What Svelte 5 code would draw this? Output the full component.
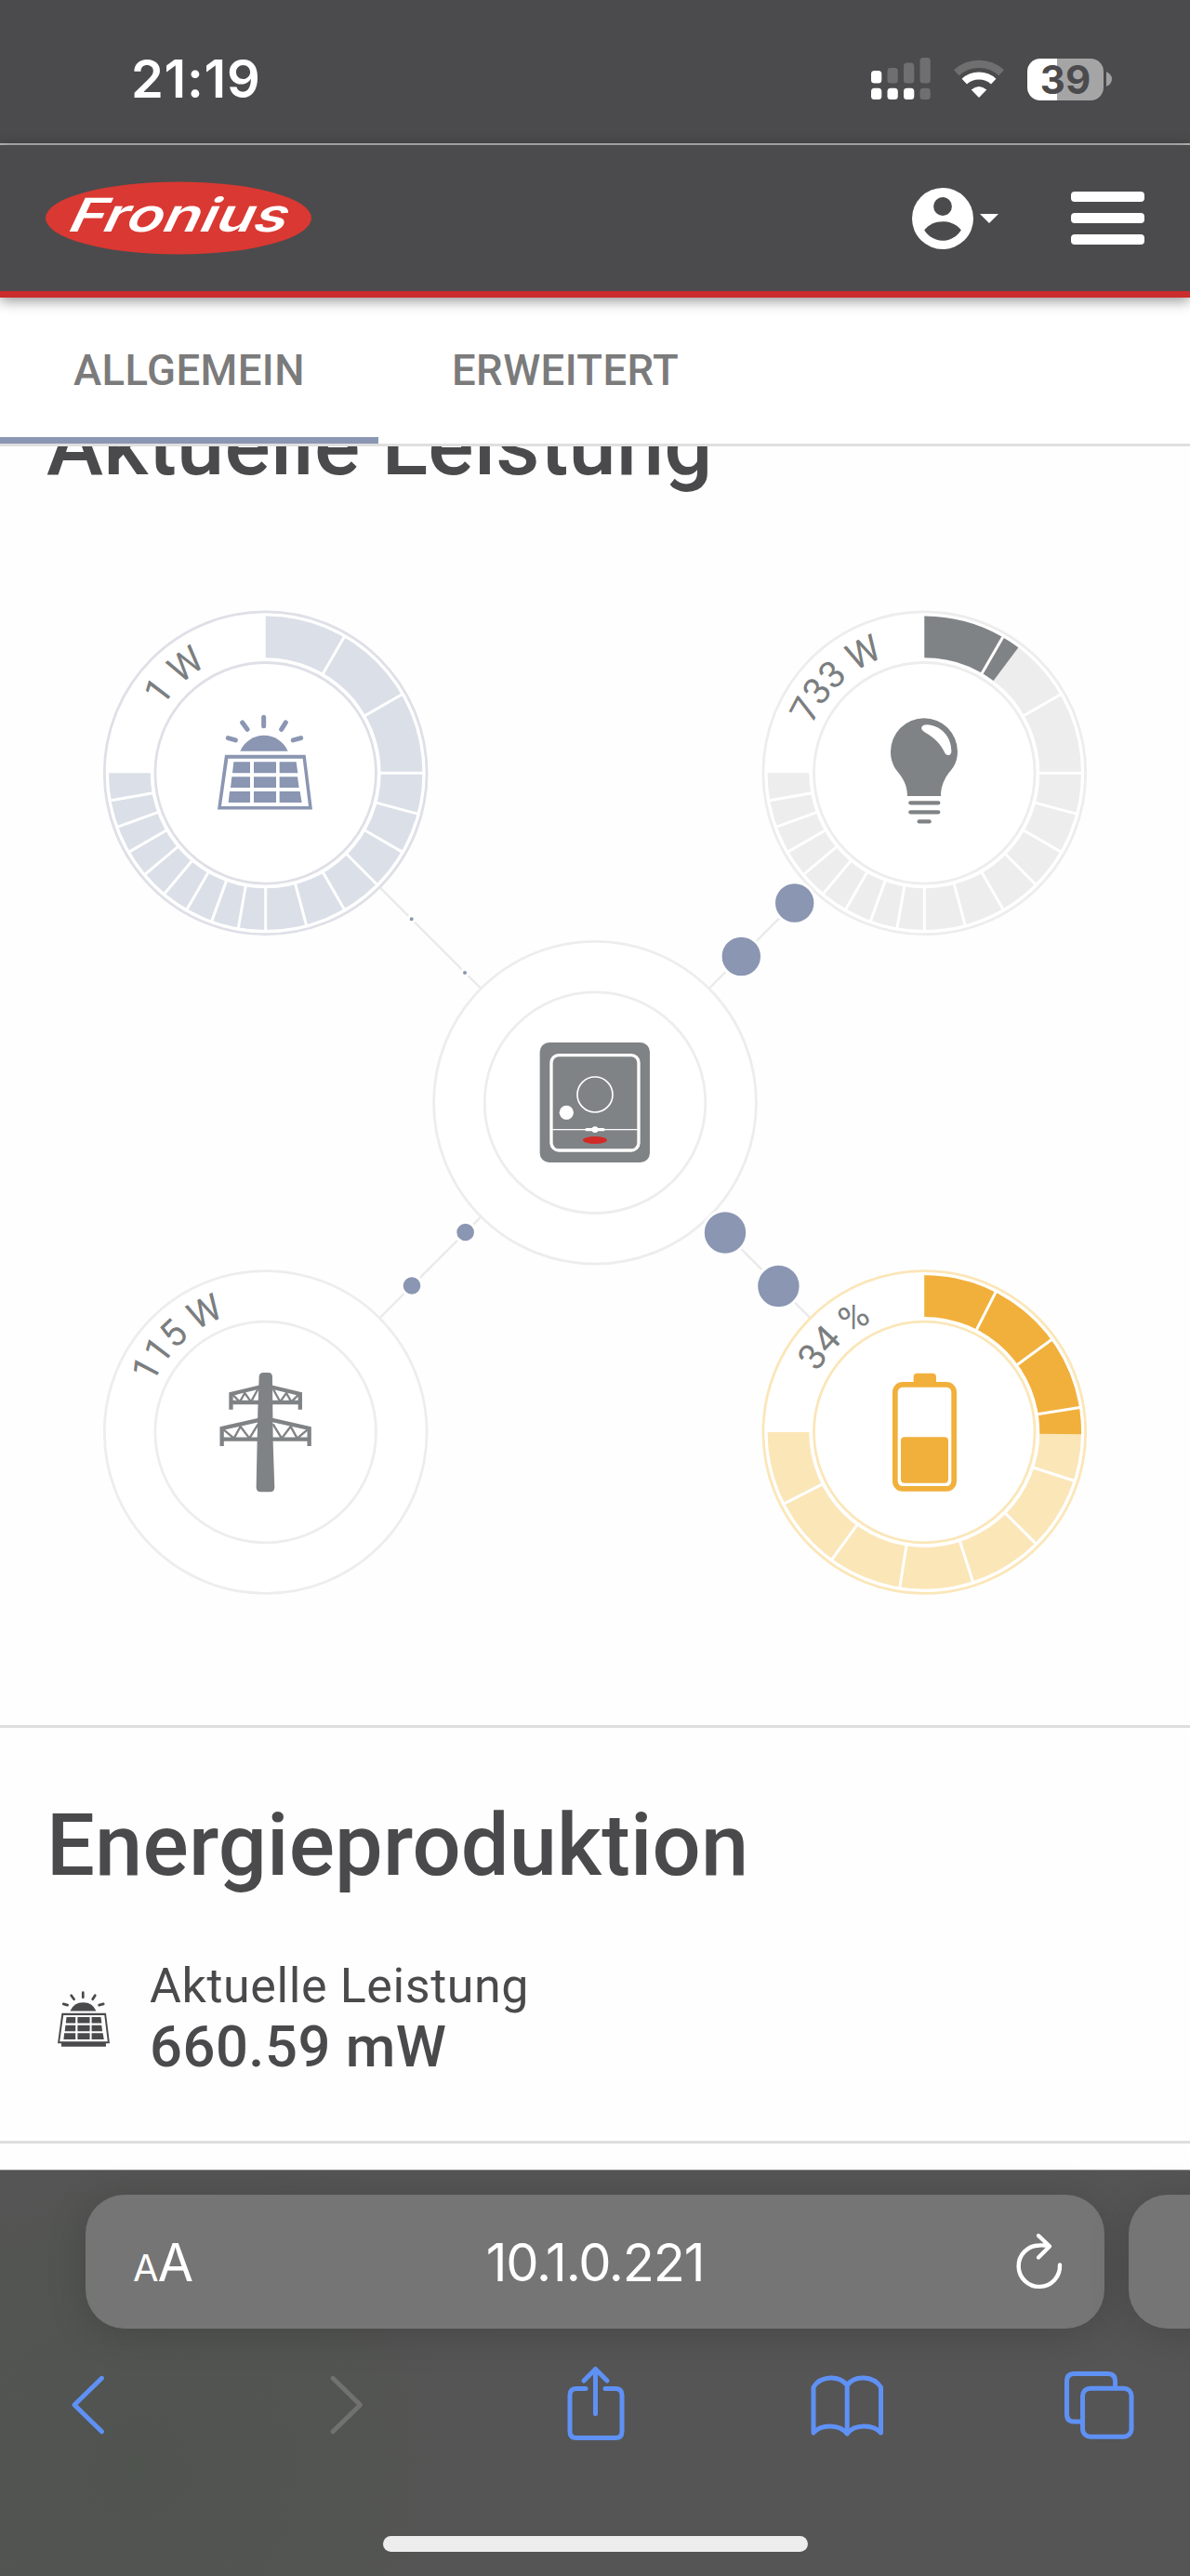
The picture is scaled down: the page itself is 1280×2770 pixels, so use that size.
<script lang="ts">
  type Pt = { x: number; y: number };
  type Ring = { bg: string; fg: string; line: string; marks: number[]; fill: number };
  type Item = {
    id: string; x: number; y: number; label?: string;
    line: string; ring?: Ring; dots: Pt[]; dotR: number;
  };

  const R_OUT = 173.4;   // outer outline
  const R_IN  = 118.8;   // inner outline
  const S_OUT = 168.7;   // scale, outer edge
  const S_IN  = 124;     // scale, inner edge
  const R_TXT = 131.5;

  const hub: Pt = { x: 640, y: 585.7 };

  // power scale gets finer: 30° steps, then 15°, then 10°
  const powerMarks = [30, 60, 90, 105, 120, 135, 150, 165, 180, 190, 200, 210, 220, 230, 240, 250, 260];
  const percentMarks = [27, 54, 81, 108, 135, 162, 189, 216, 243];

  const items: Item[] = [
    {
      id: "pv", x: 285.7, y: 231.3, label: "1 W", line: "#dfe0e7",
      ring: { bg: "#dbdfe7", fg: "#8a96b2", line: "#fff", marks: powerMarks, fill: 0 },
      dots: [{ x: 442.7, y: 388.3 }, { x: 500, y: 446 }], dotR: 2,
    },
    {
      id: "load", x: 994.3, y: 231.3, label: "733 W", line: "#ededed",
      ring: { bg: "#ededed", fg: "#808385", line: "#fff", marks: powerMarks, fill: 36.8 },
      dots: [{ x: 854.7, y: 371 }, { x: 797.3, y: 428.5 }], dotR: 20.7,
    },
    {
      id: "grid", x: 285.7, y: 940, label: "115 W", line: "#ededed",
      dots: [{ x: 443, y: 782.5 }, { x: 500.6, y: 725 }], dotR: 9.3,
    },
    {
      id: "battery", x: 994.3, y: 940, label: "34 %", line: "#fbe6b8",
      ring: { bg: "#fbe6b8", fg: "#f1b03b", line: "#fff", marks: percentMarks, fill: 90.8 },
      dots: [{ x: 780, y: 725.5 }, { x: 837.4, y: 783 }], dotR: 22.2,
    },
  ];

  const circles = [...items, { id: "inverter", x: hub.x, y: hub.y, line: "#ededed" } as Item];

  function polar(r: number, deg: number): string {
    const a = (deg - 90) * Math.PI / 180;
    return `${(r * Math.cos(a)).toFixed(2)} ${(r * Math.sin(a)).toFixed(2)}`;
  }

  // ring sector, 0° = top, clockwise
  function sector(from: number, to: number): string {
    const large = to - from > 180 ? 1 : 0;
    return `M${polar(S_OUT, from)}A${S_OUT} ${S_OUT} 0 ${large} 1 ${polar(S_OUT, to)}` +
      `L${polar(S_IN, to)}A${S_IN} ${S_IN} 0 ${large} 0 ${polar(S_IN, from)}Z`;
  }

  const bars = [
    { top: 14, on: true }, { top: 11, on: false }, { top: 5.5, on: false }, { top: 0, on: false },
  ];
</script>

{#snippet solarIcon(base: boolean)}
  <path fill-rule="evenodd" d="M24 130H284L306 307H0ZM34 142L12 296H294L275 142Z" />
  <path d="M52 153H105V189H48ZM117 153H189V189H117ZM200 153H254L259 189H200Z" />
  <path d="M46 201H105V236H42ZM117 201H189V236H117ZM200 201H258L263 236H200Z" />
  <path d="M39 248H105V284H35ZM117 248H189V284H117ZM200 248H266L272 284H200Z" />
  <path d="M73 118A84 84 0 0 1 227 118Z" />
  <path class="rays" d="M34 76L58 83M80 26L96 48M149 9V37M220 26L206 48M269 76L244 83" />
  {#if base}<path d="M22 302H284V327H22Z" />{/if}
{/snippet}

<div class="phone">
  <div class="status">
    <span class="time">21:19</span>
    <div class="indicators">
      <svg width="65" height="46" viewBox="0 0 65 46" fill="#fff">
        {#each bars as b, i}
          <rect x={i * 17.5} y={b.top} width="11.3" height={27.6 - b.top} rx="3.5" opacity={b.on ? 1 : 0.2} />
          <rect x={i * 17.5} y="32.7" width="11.3" height="12.3" rx="3.5" opacity={i < 3 ? 1 : 0.2} />
        {/each}
      </svg>
      <svg class="wifi" width="56" height="46" viewBox="0 0 56 46" fill="none" stroke="#fff">
        <path d="M3.8 16.2A36 36 0 0 1 52.2 16.2" stroke-width="8.2" opacity=".2" />
        <path d="M12.3 25.6A23.3 23.3 0 0 1 43.7 25.6" stroke-width="8" />
        <path d="M28 43L19.7 34.5Q28 27.5 36.3 34.5Z" fill="#fff" stroke="none" />
      </svg>
      <div class="batt"><span>39</span></div>
      <svg width="6" height="16" viewBox="0 0 6 16"><path d="M0 0Q6 3 6 8T0 16Z" fill="#a0a0a1" /></svg>
    </div>
  </div>

  <header>
    <svg class="logo" width="286" height="79" viewBox="0 0 286 79">
      <ellipse cx="143" cy="39.5" rx="143" ry="39" fill="#da3832" />
      <text transform="translate(24 54) skewX(-14)" textLength="234" lengthAdjust="spacingAndGlyphs">Fronius</text>
    </svg>
    <div class="actions">
      <svg width="66" height="66" viewBox="0 0 66 66">
        <circle cx="33" cy="33" r="33" fill="#fff" />
        <circle cx="33" cy="20" r="9.9" fill="#4b4b4d" />
        <path d="M13.2 45.5C22 33 44 33 52.8 45.5C43 60.5 23 60.5 13.2 45.5Z" fill="#4b4b4d" />
      </svg>
      <svg class="caret" width="20" height="10" viewBox="0 0 20 10"><path d="M0 0H20L10 10Z" fill="#fff" /></svg>
      <div class="burger"><i></i><i></i><i></i></div>
    </div>
  </header>

  <nav>
    <span class="tab active">ALLGEMEIN</span>
    <span class="tab">ERWEITERT</span>
  </nav>

  <section class="power">
    <h1>Aktuelle Leistung</h1>
    <svg class="flow" width="1280" height="1160" viewBox="0 0 1280 1160">
      <defs>
        <path id="arc" d="M{-R_TXT} 0A{R_TXT} {R_TXT} 0 0 1 0 {-R_TXT}" />
      </defs>

      {#each items as it}
        <line x1={it.x} y1={it.y} x2={hub.x} y2={hub.y} stroke="#eaeaea" stroke-width="2.4" />
      {/each}

      {#each circles as c}
        <g transform="translate({c.x} {c.y})">
          <circle r={R_OUT} fill="#fff" stroke={c.line} stroke-width="2.8" />
          <circle r={R_IN} fill="none" stroke={c.line} stroke-width="2.8" />
          {#if c.ring}
            <path d={sector(0, 270)} fill={c.ring.bg} />
            {#if c.ring.fill > 0}
              <path d={sector(0, c.ring.fill)} fill={c.ring.fg} />
            {/if}
            {#each c.ring.marks as m}
              <line y1={-S_IN + 1} y2={-S_OUT - 0.5} transform="rotate({m})" stroke={c.ring.line} stroke-width="3" />
            {/each}
          {/if}
          {#if c.label}
            <text class="value" text-anchor="middle"><textPath href="#arc" startOffset="52%">{c.label}</textPath></text>
          {/if}
        </g>
      {/each}

      {#each items as it}
        {#each it.dots as d}
          <circle cx={d.x} cy={d.y} r={it.dotR + 1.5} fill="#8a96b2" stroke="#fff" stroke-width="3" />
        {/each}
      {/each}

      <!-- icons are drawn at three times their size -->
      <g transform="translate(234 168.3) scale(.3333)" fill="#8a96b2" stroke="#8a96b2" stroke-width="0">
        {@render solarIcon(false)}
      </g>

      <g transform="translate(790 30) scale(.3333)">
        <path fill="#808385" d="M558 678C558 640 541 617 527 600C513 583 504 562 504 535A108 108 0 0 1 720 535C720 562 710 583 697 597C681 616 666 642 666 678Z" />
        <path fill="#fff" d="M604 457C606 450 612 448 620 448C668 450 701 488 700 536C698 549 685 548 680 541C664 507 645 491 617 474C608 469 602 463 604 457Z" />
        <path stroke="#808385" stroke-width="13" stroke-linecap="round" d="M568 700H658M568 730H658M596 760H629" />
      </g>

      <g transform="translate(440 380) scale(.3333)" fill="none" stroke="#fff">
        <rect x="422" y="423" width="355" height="387" rx="30" fill="#808385" stroke="none" />
        <rect x="459" y="464" width="282" height="307" rx="24" stroke-width="10" />
        <circle cx="600" cy="591" r="57" stroke-width="5" />
        <circle cx="508" cy="649" r="23" fill="#fff" stroke="none" />
        <path d="M463 704H737" stroke-width="4" />
        <path d="M573 704H627" stroke-width="10" stroke-linecap="round" />
        <circle cx="600" cy="704" r="10" fill="#fff" stroke="none" />
        <ellipse cx="600" cy="738" rx="39" ry="12" fill="#d22b27" stroke="none" />
      </g>

      <g transform="translate(90 700) scale(.3333)" fill="none" stroke="#808385">
        <path fill="#808385" stroke="none" d="M566 542Q566 528 580 528H596Q609 528 609 542L611 750L616 898Q616 913 602 913H571Q557 913 557 898L562 650Z" />
        {#each ["", "translate(1174 0) scale(-1 1)"] as flip}
          <g transform={flip}>
            <path stroke-width="13" d="M587 570L475.500 597V647M475 624H587M587 676L446 708V765M446 743H587" />
            <path stroke-width="7" d="M480 599L504 622L520 594L540 622L562 582M450 711L485 740L506 702L535 740L563 694" />
          </g>
        {/each}
      </g>

      <g transform="translate(790 700) scale(.3333)" fill="#f1b03b">
        <path d="M578 565V542Q578 530 590 530H639Q651 530 651 542V565Z" />
        <rect x="518.500" y="566.500" width="190" height="336" rx="24" fill="none" stroke="#f1b03b" stroke-width="17" />
        <rect x="537" y="736" width="153" height="148" rx="12" />
      </g>
    </svg>
  </section>

  <section class="production">
    <h1>Energieproduktion</h1>
    <div class="row">
      <svg width="56" height="60" viewBox="0 0 306 328" fill="#4a4a4c" stroke="#4a4a4c" stroke-width="0">
        {@render solarIcon(true)}
      </svg>
      <div>
        <div class="name">Aktuelle Leistung</div>
        <div class="amount">660.59 mW</div>
      </div>
    </div>
  </section>

  <div class="rest"></div>

  <footer>
    <div class="address-row">
      <div class="address">
        <span class="aa"><small>A</small>A</span>
        <span class="url">10.1.0.221</span>
        <svg width="54" height="64" viewBox="0 0 54 64" fill="none" stroke="#fff" stroke-width="4.4" stroke-linecap="round" stroke-linejoin="round">
          <path d="M49 35.500A22.200 22.200 0 1 1 26.800 14.500Q32 14 37 15.500M26 4L38 15.500L26 27.500" />
        </svg>
      </div>
      <div class="address next"></div>
    </div>
    <div class="tools">
      <svg viewBox="0 0 90 90"><path d="M60.500 17.300L31 46L60.500 74.700" /></svg>
      <svg viewBox="0 0 90 90" class="off"><path d="M37 17.300L66.500 46L37 74.700" /></svg>
      <svg viewBox="0 0 90 90">
        <path d="M37 28.500H27Q20 28.500 20 35.500V74.500Q20 81.500 27 81.500H69Q76 81.500 76 74.500V35.500Q76 28.500 69 28.500H58" />
        <path d="M47.500 55.500V7.500M35 20L47.500 7.500L60 20" />
      </svg>
      <svg viewBox="0 0 90 90">
        <path d="M10 76V27C18 14 38 14 46.200 25C54 14 74 14 82.500 27V76C74 66.500 54 66.500 46.200 77C38 66.500 18 66.500 10 76ZM46.200 25V77" />
      </svg>
      <svg viewBox="0 0 90 90">
        <path d="M27 64H18.500Q10.500 64 10.500 56V20.500Q10.500 12.500 18.500 12.500H54.500Q62.500 12.500 62.500 20.500V28" />
        <rect x="27.500" y="28.200" width="52.500" height="52" rx="8" />
      </svg>
    </div>
    <div class="home"></div>
  </footer>
</div>

<style>
  :global(body) { margin: 0; background: #fff; }

  .phone {
    width: 1280px;
    height: 2770px;
    overflow: hidden;
    display: flex;
    flex-direction: column;
    font-family: Roboto, sans-serif;
    color: #4a4a4c;
    background: #fefefe;
  }
  svg { display: block; flex: none; }

  /* status bar */
  .status {
    box-sizing: border-box;
    height: 156px;
    flex: none;
    display: flex;
    justify-content: space-between;
    align-items: flex-start;
    padding: 52px 84px 0 141px;
    background: #4b4b4d;
    border-bottom: 2px solid #b9b9ba;
    font-family: Inter, sans-serif;
    color: #fff;
  }
  .time { font-size: 56px; line-height: 66px; font-weight: 600; letter-spacing: 0.7px; }
  .indicators { display: flex; align-items: center; padding-top: 10px; }
  .wifi { margin: 0 24px 0 23px; }
  .batt {
    width: 82px;
    height: 45px;
    margin-right: 3px;
    border-radius: 14px;
    background: linear-gradient(90deg, #fff 32px, #a5a5a6 32px);
    color: #4b4b4d;
    text-align: center;
    font-size: 42px;
    line-height: 45px;
    font-weight: 700;
  }

  /* app header */
  header {
    box-sizing: border-box;
    height: 164px;
    flex: none;
    display: flex;
    justify-content: space-between;
    align-items: center;
    padding: 0 49px;
    background: #4b4b4d;
    border-bottom: 7px solid #cb2c2d;
    box-shadow: 0 3px 14px rgba(0, 0, 0, 0.45);
    z-index: 1;
  }
  .logo text { font: italic 600 50px Inter, sans-serif; fill: #fff; }
  .actions { display: flex; align-items: center; }
  .caret { margin: 0 78px 0 7px; }
  .burger { display: flex; flex-direction: column; gap: 12px; }
  .burger i { width: 79px; height: 11px; border-radius: 4px; background: #fff; }

  nav {
    box-sizing: border-box;
    height: 160px;
    flex: none;
    display: flex;
    border-bottom: 3px solid #dfdfdf;
    background: #fff;
  }
  .tab {
    box-sizing: border-box;
    width: 407px;
    padding-left: 79px;
    font-size: 45.5px;
    line-height: 158px;
    font-weight: 500;
    letter-spacing: 0.4px;
    color: #7b7b7c;
  }
  .active { border-bottom: 7px solid #8a96b2; }

  /* sections */
  section { box-sizing: border-box; flex: none; overflow: hidden; border-bottom: 3px solid #dedede; }
  h1 { margin: 0 50px; font-size: 92px; line-height: 108px; font-weight: 500; letter-spacing: 0.15px; white-space: nowrap; }
  .power { height: 1378px; }
  .power h1 { margin-top: -55px; }
  .flow { margin-top: 67px; }
  .value { font-size: 40px; letter-spacing: -0.8px; fill: #7b7e80; }
  .flow :global(.rays), .row :global(.rays) { stroke-width: 15; stroke-linecap: round; fill: none; }
  .production { height: 447px; padding-top: 73px; }
  .row { display: flex; align-items: center; gap: 43px; margin: 66px 62px 0; }
  .name { font-size: 52px; line-height: 62px; letter-spacing: 0.6px; }
  .amount { font-size: 61.5px; line-height: 69px; font-weight: 500; letter-spacing: 0.5px; }
  .rest { flex: 1; }

  /* browser bar */
  footer {
    box-sizing: border-box;
    height: 437px;
    flex: none;
    padding-top: 26px;
    border-top: 1px solid #8a8a8a;
    background: radial-gradient(circle at 150px 320px, #50544f, #555 420px);
  }
  .address-row { display: flex; gap: 26px; padding-left: 92px; }
  .address {
    box-sizing: border-box;
    flex: none;
    width: 1096px;
    height: 144px;
    border-radius: 42px;
    display: grid;
    grid-template-columns: 1fr auto 1fr;
    align-items: center;
    padding: 0 43px 0 51px;
    background: #757575;
    box-shadow: 0 6px 44px rgba(0, 0, 0, 0.16);
    color: #fff;
    font-family: Inter, sans-serif;
    font-size: 56px;
  }
  .address svg { justify-self: end; }
  .aa { padding-top: 2px; letter-spacing: -1px; }
  .aa small { font-size: 40px; }
  .url { padding: 2px 8px 0 0; letter-spacing: -1.2px; }
  .tools { display: flex; justify-content: space-between; padding: 36px 53px 0 49px; }
  .tools svg {
    width: 90px;
    height: 90px;
    fill: none;
    stroke: #5f91f5;
    stroke-width: 5;
    stroke-linecap: round;
    stroke-linejoin: round;
  }
  .tools .off { stroke: #717171; }
  .home { width: 457px; height: 17px; margin: 97px auto 0; border-radius: 9px; background: #ededed; }
</style>
